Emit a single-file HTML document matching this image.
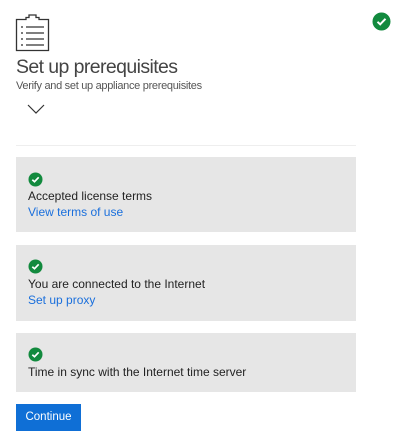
<!DOCTYPE html>
<html><head><meta charset="utf-8"><style>
body{margin:0;width:407px;height:437px;background:#fff;font-family:"Liberation Sans",sans-serif;position:relative;overflow:hidden}
.a{position:absolute;white-space:nowrap}
.box{position:absolute;left:16px;width:340px;background:#e6e6e6}
.t{font-size:12px;color:#222}
.l{font-size:12px;color:#1a6fdc}
</style></head><body>
<svg class="a" style="left:15px;top:14px" width="36" height="38" viewBox="0 0 36 38">
<path d="M1.5 5.5H11V3.5H14V1H21V3.5H24V5.5H33.5V36.5H1.5Z" fill="none" stroke="#333" stroke-width="1.3"/>
<g stroke="#333" stroke-width="1.3">
<line x1="6" y1="13" x2="8" y2="13"/><line x1="11" y1="13" x2="29" y2="13"/>
<line x1="6" y1="19" x2="8" y2="19"/><line x1="11" y1="19" x2="29" y2="19"/>
<line x1="6" y1="25" x2="8" y2="25"/><line x1="11" y1="25" x2="29" y2="25"/>
<line x1="6" y1="31" x2="8" y2="31"/><line x1="11" y1="31" x2="29" y2="31"/>
</g></svg>
<svg class="a" style="left:372px;top:12px" width="19" height="19" viewBox="0 0 19 19"><circle cx="9.5" cy="9.5" r="9" fill="#128a3e"/><path d="M5.5 9.8L8.2 12.3L13.5 6.8" fill="none" stroke="#fff" stroke-width="2"/></svg>
<div class="a" style="left:16px;top:56px;font-size:19.5px;color:#444;letter-spacing:-0.6px">Set up prerequisites</div>
<div class="a" style="left:16px;top:80px;font-size:11px;color:#555;letter-spacing:-0.3px">Verify and set up appliance prerequisites</div>
<svg class="a" style="left:27px;top:104px" width="18" height="11"><path d="M1 1L9 9L17 1" fill="none" stroke="#333" stroke-width="1.2"/></svg>
<div class="a" style="left:16px;top:145px;width:340px;height:1px;background:#eee"></div>

<div class="box" style="top:157px;height:75px"></div>
<div class="box" style="top:245px;height:76px"></div>
<div class="box" style="top:333px;height:59px"></div>

<svg class="a" style="left:28px;top:172px" width="15" height="15" viewBox="0 0 15 15"><circle cx="7.5" cy="7.5" r="7" fill="#128a3e"/><path d="M4.3 7.7L6.5 9.7L10.7 5.3" fill="none" stroke="#fff" stroke-width="1.7"/></svg>
<div class="a t" style="left:28px;top:189px">Accepted license terms</div>
<div class="a l" style="left:28px;top:205px">View terms of use</div>

<svg class="a" style="left:28px;top:259px" width="15" height="15" viewBox="0 0 15 15"><circle cx="7.5" cy="7.5" r="7" fill="#128a3e"/><path d="M4.3 7.7L6.5 9.7L10.7 5.3" fill="none" stroke="#fff" stroke-width="1.7"/></svg>
<div class="a t" style="left:28px;top:277px">You are connected to the Internet</div>
<div class="a l" style="left:28px;top:293px">Set up proxy</div>

<svg class="a" style="left:28px;top:347px" width="15" height="15" viewBox="0 0 15 15"><circle cx="7.5" cy="7.5" r="7" fill="#128a3e"/><path d="M4.3 7.7L6.5 9.7L10.7 5.3" fill="none" stroke="#fff" stroke-width="1.7"/></svg>
<div class="a t" style="left:28px;top:365px">Time in sync with the Internet time server</div>

<div class="a" style="left:16px;top:404px;width:65px;height:27px;background:#0f6fd6;color:#fff;font-size:11.5px;text-align:center;line-height:27px">Continue</div>
</body></html>
